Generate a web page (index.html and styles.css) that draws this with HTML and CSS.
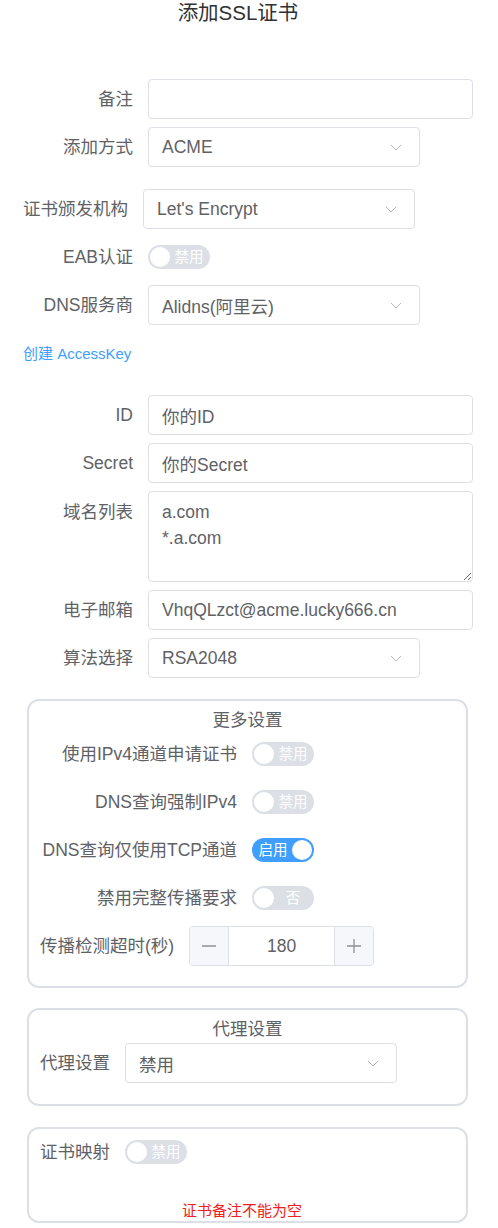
FILE: index.html
```html
<!DOCTYPE html>
<html lang="zh-CN">
<head>
<meta charset="utf-8">
<title>添加SSL证书</title>
<link rel="stylesheet" href="styles.css">
</head>
<body>
<div class="dialog">
  <div class="title">添加SSL证书</div>
  <div class="form">
    <div class="row">
      <label class="label">备注</label>
      <input class="input wide" type="text" value="">
    </div>
    <div class="row row-gap">
      <label class="label">添加方式</label>
      <div class="select"><span>ACME</span><svg class="chev" width="12" height="7" viewBox="0 0 12 7"><path d="M1 1 L6 6 L11 1" fill="none" stroke="#b4b7bd" stroke-width="1"/></svg></div>
    </div>
    <div class="row">
      <label class="label label-auto">证书颁发机构</label>
      <div class="select"><span>Let's Encrypt</span><svg class="chev" width="12" height="7" viewBox="0 0 12 7"><path d="M1 1 L6 6 L11 1" fill="none" stroke="#b4b7bd" stroke-width="1"/></svg></div>
    </div>
    <div class="row">
      <label class="label">EAB认证</label>
      <span class="switch"><span class="knob"></span><span class="switch-text">禁用</span></span>
    </div>
    <div class="row">
      <label class="label">DNS服务商</label>
      <div class="select"><span>Alidns(阿里云)</span><svg class="chev" width="12" height="7" viewBox="0 0 12 7"><path d="M1 1 L6 6 L11 1" fill="none" stroke="#b4b7bd" stroke-width="1"/></svg></div>
    </div>
    <div class="link-row"><a class="link" href="#">创建 AccessKey</a></div>
    <div class="row">
      <label class="label">ID</label>
      <input class="input wide" type="text" value="你的ID">
    </div>
    <div class="row">
      <label class="label">Secret</label>
      <input class="input wide" type="text" value="你的Secret">
    </div>
    <div class="row row-top">
      <label class="label label-top">域名列表</label>
      <textarea class="textarea wide">a.com
*.a.com</textarea>
    </div>
    <div class="row">
      <label class="label">电子邮箱</label>
      <input class="input wide" type="text" value="VhqQLzct@acme.lucky666.cn">
    </div>
    <div class="row">
      <label class="label">算法选择</label>
      <div class="select"><span>RSA2048</span><svg class="chev" width="12" height="7" viewBox="0 0 12 7"><path d="M1 1 L6 6 L11 1" fill="none" stroke="#b4b7bd" stroke-width="1"/></svg></div>
    </div>

    <div class="box box-more">
      <div class="box-title">更多设置</div>
      <div class="row">
        <label class="label">使用IPv4通道申请证书</label>
        <span class="switch"><span class="knob"></span><span class="switch-text">禁用</span></span>
      </div>
      <div class="row">
        <label class="label">DNS查询强制IPv4</label>
        <span class="switch"><span class="knob"></span><span class="switch-text">禁用</span></span>
      </div>
      <div class="row">
        <label class="label">DNS查询仅使用TCP通道</label>
        <span class="switch on"><span class="knob"></span><span class="switch-text">启用</span></span>
      </div>
      <div class="row">
        <label class="label">禁用完整传播要求</label>
        <span class="switch"><span class="knob"></span><span class="switch-text">否</span></span>
      </div>
      <div class="row row-last">
        <label class="label label-auto">传播检测超时(秒)</label>
        <div class="number">
          <span class="num-btn minus"><svg width="16" height="16" viewBox="0 0 16 16"><path d="M1 8 H15" stroke="#8d9095" stroke-width="1.3"/></svg></span>
          <span class="num-val">180</span>
          <span class="num-btn plus"><svg width="16" height="16" viewBox="0 0 16 16"><path d="M1 8 H15 M8 1 V15" stroke="#8d9095" stroke-width="1.3"/></svg></span>
        </div>
      </div>
    </div>

    <div class="box box-proxy">
      <div class="box-title">代理设置</div>
      <div class="row row-last">
        <label class="label label-auto">代理设置</label>
        <div class="select"><span>禁用</span><svg class="chev" width="12" height="7" viewBox="0 0 12 7"><path d="M1 1 L6 6 L11 1" fill="none" stroke="#b4b7bd" stroke-width="1"/></svg></div>
      </div>
    </div>

    <div class="box box-map">
      <div class="row row-last">
        <label class="label label-auto">证书映射</label>
        <span class="switch"><span class="knob"></span><span class="switch-text">禁用</span></span>
      </div>
      <div class="error">证书备注不能为空</div>
    </div>
  </div>
</div>
</body>
</html>
```

FILE: styles.css
```css
* {
  box-sizing: border-box;
}

html, body {
  margin: 0;
  padding: 0;
  background: #ffffff;
}

body {
  font-family: "Liberation Sans", "Noto Sans CJK SC", sans-serif;
  color: #606266;
  font-size: 17.5px;
}

.dialog {
  width: 498px;
  padding-bottom: 6px;
}

.title {
  text-align: center;
  font-size: 20.5px;
  line-height: 26px;
  color: #303133;
  padding-right: 22px;
  margin-bottom: 53px;
}

.form {
  padding: 0 25px 0 23px;
}

.row {
  display: flex;
  align-items: center;
  min-height: 40px;
  margin-bottom: 8px;
}

.row-gap {
  margin-bottom: 22px;
}

.row-top {
  align-items: flex-start;
}

.row-last {
  margin-bottom: 0;
}

.label {
  flex-shrink: 0;
  width: 125px;
  padding-right: 15px;
  text-align: right;
  font-size: 17.5px;
  line-height: 24px;
  color: #606266;
  white-space: nowrap;
}

.label-auto {
  width: auto;
}

.label-top {
  padding-top: 9px;
}

.input,
.select,
.textarea {
  height: 40px;
  border: 1px solid #dcdfe6;
  border-radius: 4px;
  background: #fff;
  font-family: "Liberation Sans", "Noto Sans CJK SC", sans-serif;
  font-size: 17.5px;
  color: #606266;
  padding: 0 13px;
  outline: none;
}

.wide {
  width: 325px;
}

.select {
  width: 272px;
  display: flex;
  align-items: center;
  justify-content: space-between;
  padding-right: 17px;
}

.chev {
  display: block;
}

.textarea {
  height: 91px;
  padding: 7px 13px;
  line-height: 26px;
  resize: vertical;
  display: block;
  margin: 0;
}

.link-row {
  padding: 10px 0 31px;
  line-height: 20px;
}

.link {
  font-size: 15px;
  color: #409eff;
  text-decoration: none;
}

.switch {
  display: inline-flex;
  align-items: center;
  width: 62px;
  height: 24px;
  border-radius: 12px;
  background: #dcdfe6;
  padding: 0 2px;
}

.switch.on {
  background: #409eff;
  flex-direction: row-reverse;
}

.knob {
  width: 20px;
  height: 20px;
  border-radius: 50%;
  background: #ffffff;
  flex-shrink: 0;
}

.switch-text {
  flex: 1;
  text-align: center;
  color: #ffffff;
  font-size: 14.5px;
  line-height: 20px;
}

.box {
  margin: 0 5px 0 4px;
  border: 2px solid #dcdfe6;
  border-radius: 12px;
  padding: 7px 11px 20px 11px;
}

.box-more {
  margin-top: 21px;
}

.box-proxy {
  margin-top: 20px;
  padding-bottom: 21px;
}

.box-map {
  margin-top: 21px;
  padding-top: 3px;
  padding-bottom: 0;
}

.box-title {
  text-align: center;
  line-height: 24px;
  font-size: 17.5px;
  color: #606266;
  margin-bottom: 2px;
  margin-left: -11px;
  margin-right: -11px;
}

.box-more .label {
  width: 212px;
}

.box-more .label-auto {
  width: auto;
}

.number {
  display: flex;
  width: 185px;
  height: 40px;
  border: 1px solid #dcdfe6;
  border-radius: 4px;
  overflow: hidden;
}

.num-btn {
  width: 39px;
  flex-shrink: 0;
  background: #f5f7fa;
  display: flex;
  align-items: center;
  justify-content: center;
}

.num-btn svg {
  display: block;
}

.minus {
  border-right: 1px solid #dcdfe6;
}

.plus {
  border-left: 1px solid #dcdfe6;
}

.num-val {
  flex: 1;
  text-align: center;
  line-height: 38px;
  font-size: 17.5px;
  color: #606266;
}

.error {
  margin-top: 29px;
  text-align: center;
  font-size: 15px;
  line-height: 20px;
  color: #f02020;
  margin-left: -11px;
}
```
